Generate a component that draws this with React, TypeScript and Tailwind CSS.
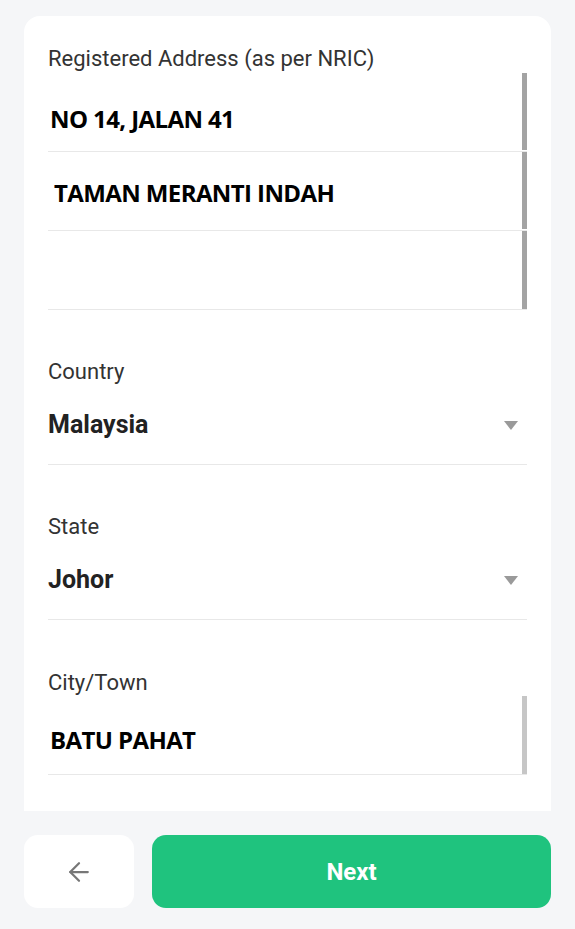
import React from "react";
import { ArrowLeft } from "lucide-react";

const roboto = { fontFamily: "Roboto, 'Liberation Sans', sans-serif" };
const addrFont = { fontFamily: "'Open Sans', 'Liberation Sans', sans-serif" };

function Chevron() {
  return (
    <svg width="14" height="9" viewBox="0 0 14 9" className="shrink-0">
      <path d="M0 0 L14 0 L7 9 Z" fill="#9a9a9a" />
    </svg>
  );
}

function AddressRow({ text, pt, indent, last }: { text: string; pt: string; indent: string; last?: boolean }) {
  return (
    <div className="relative flex h-[79px] border-b border-[#e8e8e8]">
      <div className={`${pt} ${indent} text-[24px] font-bold leading-[30px] tracking-[-0.6px] text-black`} style={addrFont}>
        {text}
      </div>
      <div className={`absolute right-0 top-0 ${last ? "bottom-0" : "bottom-[1px]"} w-[5px] bg-[#a3a3a3]`} />
    </div>
  );
}

function SelectField({ label, value }: { label: string; value: string }) {
  return (
    <div className="pt-[50px]">
      <div className="text-[22px] leading-[24px] text-[#333]" style={roboto}>
        {label}
      </div>
      <div className="mt-[26px] flex items-center justify-between border-b border-[#e8e8e8] pb-[24px] pr-[9px]">
        <span className="text-[25px] font-bold leading-[30px] text-[#222]" style={roboto}>
          {value}
        </span>
        <Chevron />
      </div>
    </div>
  );
}

export default function App() {
  return (
    <div className="min-h-[929px] bg-[#f5f6f8] px-[24px] pt-[16px]">
      <div className="h-[795px] rounded-t-[16px] bg-white pl-[24px] pr-[24px] pt-[31px]">
        <div className="text-[22px] leading-[24px] text-[#333]" style={roboto}>
          Registered Address (as per NRIC)
        </div>
        <div className="mt-[2px]">
          <AddressRow text="NO 14, JALAN 41" pt="pt-[31px]" indent="pl-[2px]" />
          <AddressRow text="TAMAN MERANTI INDAH" pt="pt-[26px]" indent="pl-[6px]" />
          <AddressRow text="" pt="pt-[26px]" indent="pl-[2px]" last />
        </div>
        <SelectField label="Country" value="Malaysia" />
        <SelectField label="State" value="Johor" />
        <div className="pt-[51px]">
          <div className="text-[22px] leading-[24px] text-[#333]" style={roboto}>
            City/Town
          </div>
          <div className="relative mt-[1px] h-[79px] border-b border-[#e8e8e8]">
            <div className="pl-[2px] pt-[29px] text-[24px] font-bold leading-[30px] tracking-[-0.6px] text-black" style={addrFont}>
              BATU PAHAT
            </div>
            <div className="absolute bottom-0 right-0 top-0 w-[5px] bg-[#c6c6c6]" />
          </div>
        </div>
      </div>
      <div className="mt-[24px] flex gap-[18px]">
        <button className="flex h-[73px] w-[110px] items-center justify-center rounded-[14px] bg-white">
          <ArrowLeft size={30} color="#777" strokeWidth={1.8} />
        </button>
        <button
          className="flex h-[73px] flex-1 items-center justify-center rounded-[14px] bg-[#1fc37e] text-[24px] font-bold text-white"
          style={roboto}
        >
          Next
        </button>
      </div>
    </div>
  );
}
